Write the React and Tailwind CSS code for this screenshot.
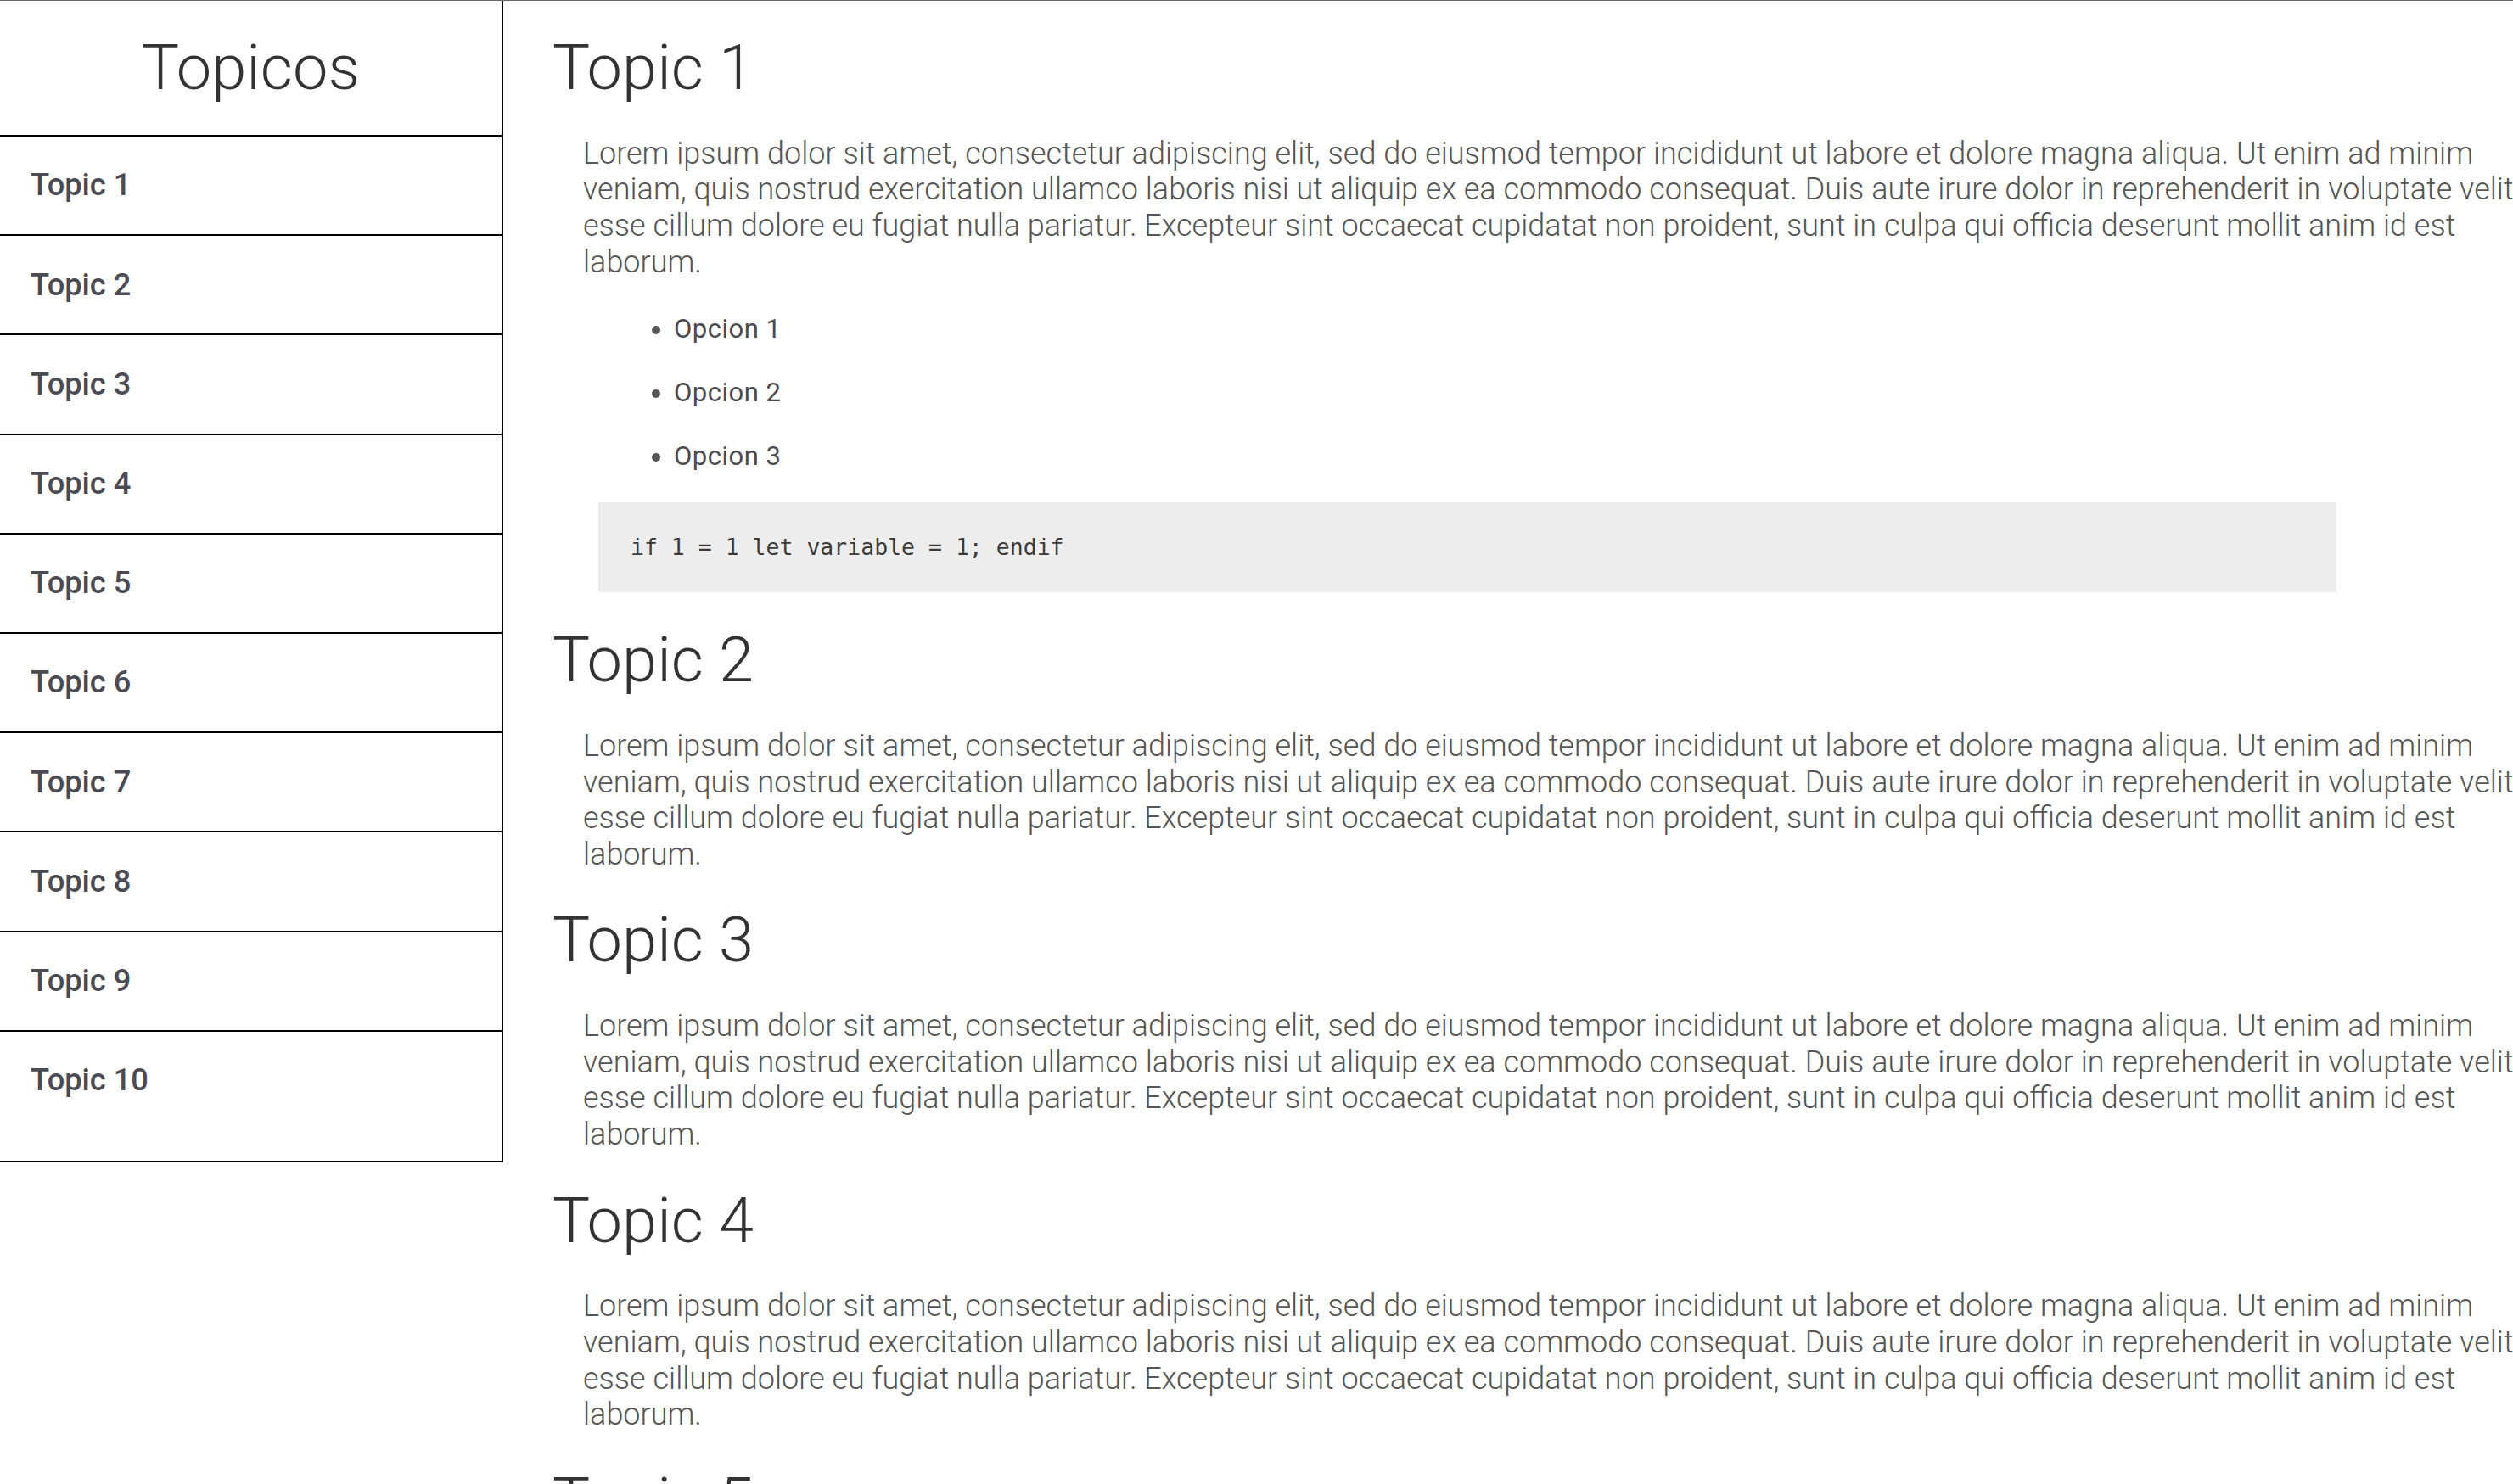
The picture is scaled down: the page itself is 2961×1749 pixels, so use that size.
import React from "react";

const LOREM =
  "Lorem ipsum dolor sit amet, consectetur adipiscing elit, sed do eiusmod tempor incididunt ut labore et dolore magna aliqua. Ut enim ad minim veniam, quis nostrud exercitation ullamco laboris nisi ut aliquip ex ea commodo consequat. Duis aute irure dolor in reprehenderit in voluptate velit esse cillum dolore eu fugiat nulla pariatur. Excepteur sint occaecat cupidatat non proident, sunt in culpa qui officia deserunt mollit anim id est laborum.";

const topics = Array.from({ length: 10 }, (_, i) => `Topic ${i + 1}`);

function Section({ title, first }) {
  return (
    <section>
      <h2
        className={`${first ? "" : "mt-[36px]"} text-[74px] leading-[88.8px] font-light text-[#333333]`}
      >
        {title}
      </h2>
      <p className="mt-[35px] ml-[36px] w-[2293px] text-[36px] leading-[42.6px] font-light text-[#555555]">
        {LOREM}
      </p>
      {first && (
        <>
          <ul className="mt-[20px] ml-[36px] pl-[107px] list-disc text-[31px] tracking-[0.5px] leading-[75px] font-normal text-[#4a4a4f] marker:text-[#555]">
            <li>Opcion 1</li>
            <li>Opcion 2</li>
            <li>Opcion 3</li>
          </ul>
          <pre className="mt-[17px] mb-[1px] ml-[54px] w-[2048px] h-[106px] bg-[#ededed] pl-[38px] flex items-center text-[26.5px] text-[#3a3a3a] [font-family:'DejaVu_Sans_Mono','Liberation_Mono',monospace]">
            if 1 = 1 let variable = 1; endif
          </pre>
        </>
      )}
    </section>
  );
}

export default function App() {
  return (
    <div className="h-screen overflow-hidden bg-white border-t border-[#666666] flex items-start [font-family:Roboto,'Liberation_Sans',sans-serif]">
      <aside className="w-[593px] shrink-0 border-r-2 border-b-2 border-black flex flex-col">
        <div className="h-[160px] border-b-2 border-black flex items-center justify-center">
          <h1 className="text-[74px] font-light text-[#333333] leading-none">
            Topicos
          </h1>
        </div>
        <nav className="flex flex-col pb-[37px]">
          {topics.map((t, i) => (
            <a
              key={t}
              href="#"
              className={`h-[115.2px] shrink-0 flex items-center pl-[36px] text-[36.25px] font-medium text-[#4b4b53] ${
                i < topics.length - 1 ? "box-content border-b-2 border-black" : ""
              }`}
            >
              {t}
            </a>
          ))}
        </nav>
      </aside>
      <main className="flex-1 min-w-0 pt-[35px] pl-[58px]">
        {topics.map((t, i) => (
          <Section key={t} title={t} first={i === 0} />
        ))}
      </main>
    </div>
  );
}
